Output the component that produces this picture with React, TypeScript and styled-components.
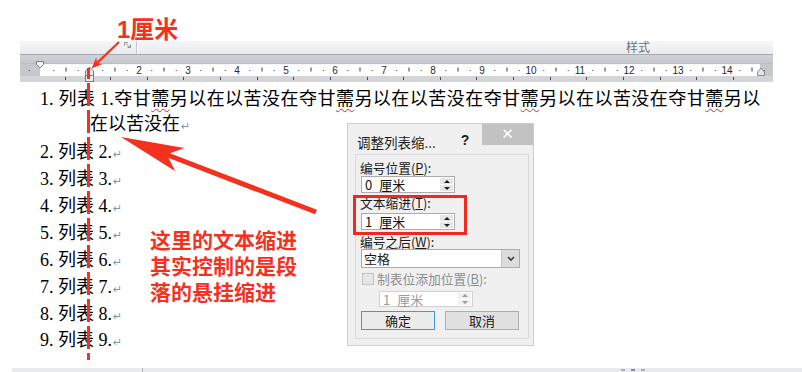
import React from "react";
import styled, { createGlobalStyle } from "styled-components";

const RED = "#f4311f";
const CM = 49;
const ZERO = 41;

const GlobalStyle = createGlobalStyle`
  html, body {
    margin: 0;
    padding: 0;
    background: #fff;
  }
  body {
    font-family: "Liberation Serif", "Noto Sans CJK SC", serif;
  }
`;

const Page = styled.div`
  position: relative;
  width: 802px;
  height: 372px;
  overflow: hidden;
  display: flex;
  flex-direction: column;
  background: #fff;
`;

const Ribbon = styled.div`
  margin: 41px 0 0 20px;
  width: 753px;
`;

const TopBand = styled.div`
  display: flex;
  height: 13px;
  background: linear-gradient(#f5f6f8, #e9ebee);
  border-bottom: 1px solid #a3a8af;
`;

const GroupEnd = styled.div`
  width: 116px;
  display: flex;
  justify-content: flex-end;
  align-items: flex-start;
  padding: 1px 5px 0 0;
  box-sizing: border-box;
`;

const Separator = styled.div`
  width: 1px;
  background: #c3c7cd;
  box-shadow: 1px 0 0 #fff;
`;

const GroupLabel = styled.div`
  padding-left: 489px;
  font: 12px/11px "Noto Sans CJK SC", sans-serif;
  color: #727272;
`;

const RulerSvg = styled.svg`
  display: block;
`;

const Doc = styled.div`
  margin-top: 4.5px;
  padding-left: 40px;
  display: flex;
  flex-direction: column;
  gap: 1.86px;
  font-size: 18px;
  line-height: 25px;
  color: #000;
`;

const Item = styled.div<{ $first?: boolean }>`
  margin-bottom: ${(p) => (p.$first ? "2.1px" : "0")};
`;

const FirstLine = styled.div`
  width: 720px;
  text-align: justify;
  text-align-last: justify;
`;

const Hanging = styled.div`
  padding-left: 50px;
`;

const Misspelt = styled.span`
  text-decoration: underline wavy #e5261c;
  text-decoration-thickness: 1px;
  text-underline-offset: 3px;
`;

const Return = styled.span`
  font: 11px "DejaVu Sans", sans-serif;
  color: #8094ae;
  margin-left: 1px;
`;

const StatusBar = styled.div`
  margin: auto 0 0 12px;
  height: 4px;
  display: flex;
  background: #e8eaee;
`;

const StatusCell = styled.div`
  width: 130px;
`;

const StatusDivider = styled.div`
  width: 1px;
  background: #b3b7bd;
`;

const StatusRest = styled.div`
  flex: 1;
  display: flex;
  gap: 6px;
  padding: 1px 0 0 478px;
`;

const StatusPip = styled.span<{ $c: string }>`
  width: 4px;
  height: 2px;
  background: ${(p) => p.$c};
`;

const Overlay = styled.svg`
  position: absolute;
  left: 0;
  top: 0;
  pointer-events: none;
`;

const Callout = styled.div`
  position: absolute;
  left: 117px;
  top: 17px;
  font: bold 24px/26px "Liberation Sans", "Noto Sans CJK SC", sans-serif;
  color: ${RED};
`;

const Note = styled.div`
  position: absolute;
  left: 150px;
  top: 227px;
  font: bold 21px/25.8px "Noto Sans CJK SC", sans-serif;
  color: ${RED};
`;

const Highlight = styled.div`
  position: absolute;
  left: 353px;
  top: 195px;
  width: 114px;
  height: 40px;
  box-sizing: border-box;
  border: 3px solid #f0281e;
`;

/* dialog */

const Dialog = styled.div`
  position: absolute;
  left: 347px;
  top: 123px;
  width: 187px;
  height: 223px;
  box-sizing: border-box;
  border: 1px solid #cdcdcd;
  background: #f0f0f0;
  display: flex;
  flex-direction: column;
  font-family: "Noto Sans CJK SC", sans-serif;
  color: #1b1b1b;
`;

const TitleBar = styled.div`
  display: flex;
  align-items: flex-start;
  height: 30px;
`;

const Title = styled.div`
  flex: 1;
  padding: 9px 0 0 9px;
  font-size: 13.5px;
  line-height: 18px;
`;

const Help = styled.div`
  width: 16px;
  margin: 8px 9px 0 0;
  text-align: center;
  font: bold 14px/16px "Liberation Sans", sans-serif;
  color: #222;
`;

const Close = styled.div`
  width: 51px;
  height: 21px;
  background: #c2c2c2;
  color: #fff;
  display: flex;
  align-items: center;
  justify-content: center;
  font: 15px/1 "DejaVu Sans", sans-serif;
`;

const Panel = styled.div`
  flex: 1;
  margin: 0 4px 6px 7px;
  border: 1px solid #d9d9d9;
  padding-left: 5px;
  display: flex;
  flex-direction: column;
  align-items: flex-start;
`;

const Label = styled.div<{ $mt: number; $disabled?: boolean }>`
  margin-top: ${(p) => p.$mt}px;
  margin-left: -1px;
  font-size: 12.75px;
  line-height: 14px;
  height: 14px;
  color: ${(p) => (p.$disabled ? "#8e8e8e" : "#1b1b1b")};
  white-space: nowrap;
`;

const SpinBox = styled.div<{ $mt: number; $disabled?: boolean }>`
  margin: ${(p) => p.$mt}px 0 0 ${(p) => (p.$disabled ? 18 : 0)}px;
  display: flex;
  width: 94px;
  height: ${(p) => (p.$disabled ? 16 : 17)}px;
  box-sizing: border-box;
  border: 1px solid ${(p) => (p.$disabled ? "#d2d2d2" : "#ababab")};
  background: #fff;
  color: ${(p) => (p.$disabled ? "#9a9a9a" : "#111")};
`;

const SpinValue = styled.div`
  flex: 1;
  display: flex;
  gap: 7px;
  padding-left: 3px;
  font-size: 13px;
  line-height: 15px;
`;

const SpinButtons = styled.div`
  width: 15px;
  display: flex;
  flex-direction: column;
  gap: 1px;
  padding: 1px;
  box-sizing: border-box;
`;

const SpinArrow = styled.div<{ $up?: boolean; $disabled?: boolean }>`
  flex: 1;
  display: flex;
  align-items: center;
  justify-content: center;
  background: ${(p) => (p.$disabled ? "#f1f1f1" : "#e6e6e6")};
  &::after {
    content: "";
    border-left: 3px solid transparent;
    border-right: 3px solid transparent;
    ${(p) => (p.$up ? "border-bottom" : "border-top")}: 3px solid
      ${(p) => (p.$disabled ? "#9a9a9a" : "#1e1e1e")};
  }
`;

const Select = styled.div`
  display: flex;
  width: 159px;
  height: 19px;
  box-sizing: border-box;
  border: 1px solid #ababab;
  background: #fff;
`;

const SelectValue = styled.div`
  flex: 1;
  padding-left: 2px;
  font-size: 13px;
  line-height: 17px;
`;

const SelectButton = styled.div`
  width: 17px;
  background: #dcdcdc;
  border-left: 1px solid #c4c4c4;
  display: flex;
  align-items: center;
  justify-content: center;
`;

const CheckRow = styled.div`
  margin-top: 4px;
  display: flex;
  align-items: center;
  gap: 4px;
  height: 14px;
`;

const CheckBox = styled.div`
  width: 12px;
  height: 12px;
  box-sizing: border-box;
  margin-left: 1px;
  border: 1px solid #c2c2c2;
  background: #e6e6e6;
`;

const Buttons = styled.div`
  margin-top: 4px;
  display: flex;
  gap: 10px;
`;

const Button = styled.div<{ $primary?: boolean }>`
  width: 74px;
  height: 19px;
  box-sizing: border-box;
  border: 1px solid ${(p) => (p.$primary ? "#4196e6" : "#adadad")};
  background: ${(p) => (p.$primary ? "#ececec" : "#e1e1e1")};
  text-align: center;
  font-size: 13px;
  line-height: 17px;
`;

function Ruler() {
  const marks: React.ReactNode[] = [];
  for (let n = -1; n <= 14; n++) {
    const x = ZERO + CM * n;
    [12.25, 36.75].forEach((d) => {
      const dx = x + d;
      if (dx > 22 && dx < 771) {
        marks.push(<rect key={`d${n}-${d}`} x={dx} y={70} width={1} height={1} fill="#3c3c3c" />);
      }
    });
    const hx = x + 24.5;
    if (hx > 22 && hx < 771) {
      marks.push(<rect key={`h${n}`} x={hx} y={67.5} width={1} height={4} fill="#3c3c3c" />);
    }
    if (n >= 2) {
      marks.push(
        <text key={`n${n}`} x={x} y={73.5} textAnchor="middle" fontSize={10} fontFamily="Liberation Sans, sans-serif" fill="#2a2a2a">
          {n}
        </text>
      );
    }
  }
  const tabs = [65];
  for (let x = 110; x < 760; x += 36.65) tabs.push(x);

  return (
    <RulerSvg width={753} height={27} viewBox="20 55 753 27">
      <defs>
        <linearGradient id="rulerTop" x1="0" y1="0" x2="0" y2="1">
          <stop offset="0" stopColor="#cfd2d7" />
          <stop offset="1" stopColor="#c3c6cb" />
        </linearGradient>
      </defs>
      <rect x={20} y={55} width={753} height={9} fill="url(#rulerTop)" />
      <rect x={20} y={64} width={753} height={12} fill="#c5c8cd" />
      <rect x={40} y={64} width={720} height={12} fill="#fff" />
      <rect x={20} y={76} width={753} height={6} fill="#d3d5d9" />
      <rect x={20} y={63.5} width={753} height={0.6} fill="#b0b4ba" />
      {marks}
      {tabs.map((x) => (
        <rect key={`t${x}`} x={Math.round(x)} y={77} width={1} height={3} fill="#4a4a4a" />
      ))}
      <polygon points="36.5,61.5 43.5,61.5 43.5,64.5 40,68 36.5,64.5" fill="#f3f3f3" stroke="#7b7b7b" />
      <polygon points="85.5,75.5 85.5,71 89.5,67 93.5,71 93.5,75.5" fill="#ececec" stroke="#7b7b7b" />
      <rect x={85.5} y={75.5} width={8} height={6} fill="#ececec" stroke="#7b7b7b" />
      <polygon points="757.5,75.5 757.5,72 761,68 764.5,72 764.5,75.5" fill="#e4e4e4" stroke="#8a8a8a" />
    </RulerSvg>
  );
}

const Launcher = () => (
  <svg width="7" height="6" viewBox="0 0 7 6">
    <path d="M0.5 4V0.5H4" fill="none" stroke="#9a9a9a" />
    <path d="M2 1.5L5.5 5" stroke="#8a8a8a" />
    <path d="M3.5 5.5H6.5V2.5" fill="none" stroke="#8a8a8a" />
  </svg>
);

const Chevron = () => (
  <svg width="8" height="5" viewBox="0 0 8 5">
    <path d="M1 1l3 3 3-3" fill="none" stroke="#3a3a3a" strokeWidth="1.6" />
  </svg>
);

function Spin({ value, mt, disabled }: { value: string; mt: number; disabled?: boolean }) {
  const [num, unit] = value.split(" ");
  return (
    <SpinBox $mt={mt} $disabled={disabled}>
      <SpinValue>
        <span>{num}</span>
        <span>{unit}</span>
      </SpinValue>
      <SpinButtons>
        <SpinArrow $up $disabled={disabled} />
        <SpinArrow $disabled={disabled} />
      </SpinButtons>
    </SpinBox>
  );
}

const phrase = (k: number) => (
  <React.Fragment key={k}>
    夺甘<Misspelt>薷</Misspelt>另以{k < 3 ? "在以苦没在" : ""}
  </React.Fragment>
);

export default function App() {
  return (
    <Page>
      <GlobalStyle />
      <Ribbon>
        <TopBand>
          <GroupEnd>
            <Launcher />
          </GroupEnd>
          <Separator />
          <GroupLabel>样式</GroupLabel>
        </TopBand>
        <Ruler />
      </Ribbon>

      <Doc>
        <Item $first>
          <FirstLine>
            1. 列表 1.{[0, 1, 2, 3].map(phrase)}
          </FirstLine>
          <Hanging>
            在以苦没在<Return>↵</Return>
          </Hanging>
        </Item>
        {[2, 3, 4, 5, 6, 7, 8, 9].map((n) => (
          <Item key={n}>
            {n}. 列表 {n}.<Return>↵</Return>
          </Item>
        ))}
      </Doc>

      <StatusBar>
        <StatusCell />
        <StatusDivider />
        <StatusRest>
          <StatusPip $c="#9fb0c8" />
          <StatusPip $c="#7e8fa8" />
          <StatusPip $c="#9fb0c8" />
        </StatusRest>
      </StatusBar>

      <Overlay width={802} height={372} viewBox="0 0 802 372">
        <line x1={88.5} y1={68} x2={88.5} y2={360} stroke={RED} strokeWidth={3} strokeDasharray="23 4" strokeDashoffset={12} />
        <line x1={119} y1={42} x2={97.5} y2={62.6} stroke={RED} strokeWidth={2.2} />
        <polygon points="91.5,68.5 102.5,64 97.2,62.9 96.2,57.6" fill={RED} />
        <line x1={316} y1={212} x2={165} y2={154} stroke={RED} strokeWidth={5} />
        <polygon points="121,137 184.3,147.9 166.7,154.6 175.3,171.3" fill={RED} />
      </Overlay>

      <Callout>1厘米</Callout>
      <Note>
        这里的文本缩进
        <br />
        其实控制的是段
        <br />
        落的悬挂缩进
      </Note>

      <Dialog>
        <TitleBar>
          <Title>调整列表缩...</Title>
          <Help>?</Help>
          <Close>✕</Close>
        </TitleBar>
        <Panel>
          <Label $mt={6}>
            编号位置(<u>P</u>):
          </Label>
          <Spin value="0 厘米" mt={1} />
          <Label $mt={3}>
            文本缩进(<u>T</u>):
          </Label>
          <Spin value="1 厘米" mt={3} />
          <Label $mt={5}>
            编号之后(<u>W</u>):
          </Label>
          <Select>
            <SelectValue>空格</SelectValue>
            <SelectButton>
              <Chevron />
            </SelectButton>
          </Select>
          <CheckRow>
            <CheckBox />
            <Label $mt={0} $disabled>
              制表位添加位置(<u>B</u>):
            </Label>
          </CheckRow>
          <Spin value="1 厘米" mt={5} disabled />
          <Buttons>
            <Button $primary>确定</Button>
            <Button>取消</Button>
          </Buttons>
        </Panel>
      </Dialog>
      <Highlight />
    </Page>
  );
}
